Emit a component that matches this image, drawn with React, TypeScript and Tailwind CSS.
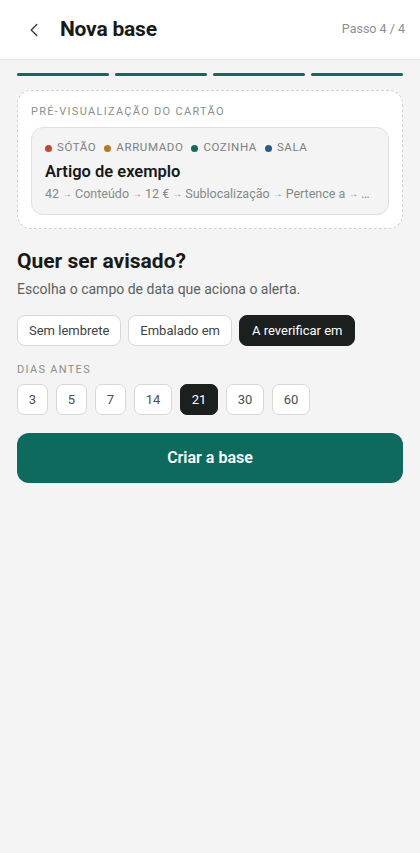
import { ChevronLeft } from 'lucide-react'

const tags = [
  { label: 'Sótão', color: 'bg-[#c8452f]' },
  { label: 'Arrumado', color: 'bg-[#b87a1e]' },
  { label: 'Cozinha', color: 'bg-[#0e6b5e]' },
  { label: 'Sala', color: 'bg-[#2b5a8e]' },
]

const pathParts = ['42', 'Conteúdo', '12 €', 'Sublocalização', 'Pertence a', '…']
const fields = ['Sem lembrete', 'Embalado em', 'A reverificar em']
const days = [3, 5, 7, 14, 21, 30, 60]

export default function App() {
  const selectedField = 'A reverificar em'
  const selectedDays = 21
  return (
    <div className="min-h-[853px] bg-[#f3f4f3] font-['Roboto',sans-serif] text-[#161a19]">
      <header className="flex h-[60px] items-center border-b border-[#e3e5e3] bg-white pl-[22px] pr-[15px]">
        <button type="button" className="flex h-6 w-6 items-center justify-center text-[#3a3f3d]">
          <ChevronLeft size={22} strokeWidth={1.6} />
        </button>
        <h1 className="ml-[14px] text-[21px] font-bold tracking-[-0.2px]">Nova base</h1>
        <span className="ml-auto text-[12.5px] text-[#8a908d]">Passo 4 / 4</span>
      </header>

      <main className="px-[17px]">
        <div className="mt-[13px] flex gap-[6px]">
          {[0, 1, 2, 3].map((i) => (
            <div key={i} className="h-[3px] flex-1 rounded-full bg-[#0e6b5e]" />
          ))}
        </div>

        <section className="mt-[14px] rounded-[14px] border border-dashed border-[#cfd3d0] bg-white px-[13px] pb-[13px] pt-[13px]">
          <div className="text-[11px] uppercase leading-[16px] tracking-[1.3px] text-[#8a908d]">
            Pré-visualização do cartão
          </div>
          <div className="mt-[7px] rounded-[12px] border border-[#dfe2df] bg-[#f3f4f3] px-[13px] pb-[11px] pt-[11px]">
            <div className="flex h-[18px] items-center gap-[8px]">
              {tags.map((t) => (
                <span key={t.label} className="flex items-center gap-[5px] text-[11.5px] uppercase tracking-[0.6px] text-[#7c8380]">
                  <span className={`h-[7px] w-[7px] rounded-full ${t.color}`} />
                  {t.label}
                </span>
              ))}
            </div>
            <div className="mt-[4px] text-[16.5px] font-semibold leading-[22px]">Artigo de exemplo</div>
            <div className="mt-[2px] flex items-center gap-[3px] whitespace-nowrap text-[12.5px] leading-[18px] text-[#858b88]">
              {pathParts.map((p, i) => (
                <span key={p} className="flex items-center gap-[3px]">
                  {i > 0 && <span className="text-[10px]">→</span>}
                  {p}
                </span>
              ))}
            </div>
          </div>
        </section>

        <h2 className="mt-[18px] text-[21px] font-bold leading-[28px]">Quer ser avisado?</h2>
        <p className="mt-[4px] text-[14px] leading-[20px] text-[#5b625f]">Escolha o campo de data que aciona o alerta.</p>

        <div className="mt-[16px] flex gap-[7px]">
          {fields.map((f) => (
            <button
              key={f}
              type="button"
              className={
                f === selectedField
                  ? 'h-[31px] rounded-[8px] border border-[#1b1f1e] bg-[#1b1f1e] px-[12px] text-[13px] text-white'
                  : 'h-[31px] rounded-[8px] border border-[#d6d9d7] bg-white px-[11px] text-[13px] text-[#3d4341]'
              }
            >
              {f}
            </button>
          ))}
        </div>

        <div className="mt-[16px] text-[11px] uppercase leading-[16px] tracking-[1.3px] text-[#8a908d]">Dias antes</div>
        <div className="mt-[6px] flex gap-[8px]">
          {days.map((d) => (
            <button
              key={d}
              type="button"
              className={
                (d === selectedDays
                  ? 'border-[#1b1f1e] bg-[#1b1f1e] text-white '
                  : 'border-[#d6d9d7] bg-white text-[#4a504e] ') +
                (d < 10 ? 'w-[31px] ' : 'w-[38px] ') +
                'h-[31px] rounded-[7px] border text-[13px]'
              }
            >
              {d}
            </button>
          ))}
        </div>

        <button
          type="button"
          className="mt-[18px] h-[50px] w-full rounded-[12px] bg-[#0d6b5e] text-[16px] font-semibold text-white"
        >
          Criar a base
        </button>
      </main>
    </div>
  )
}
